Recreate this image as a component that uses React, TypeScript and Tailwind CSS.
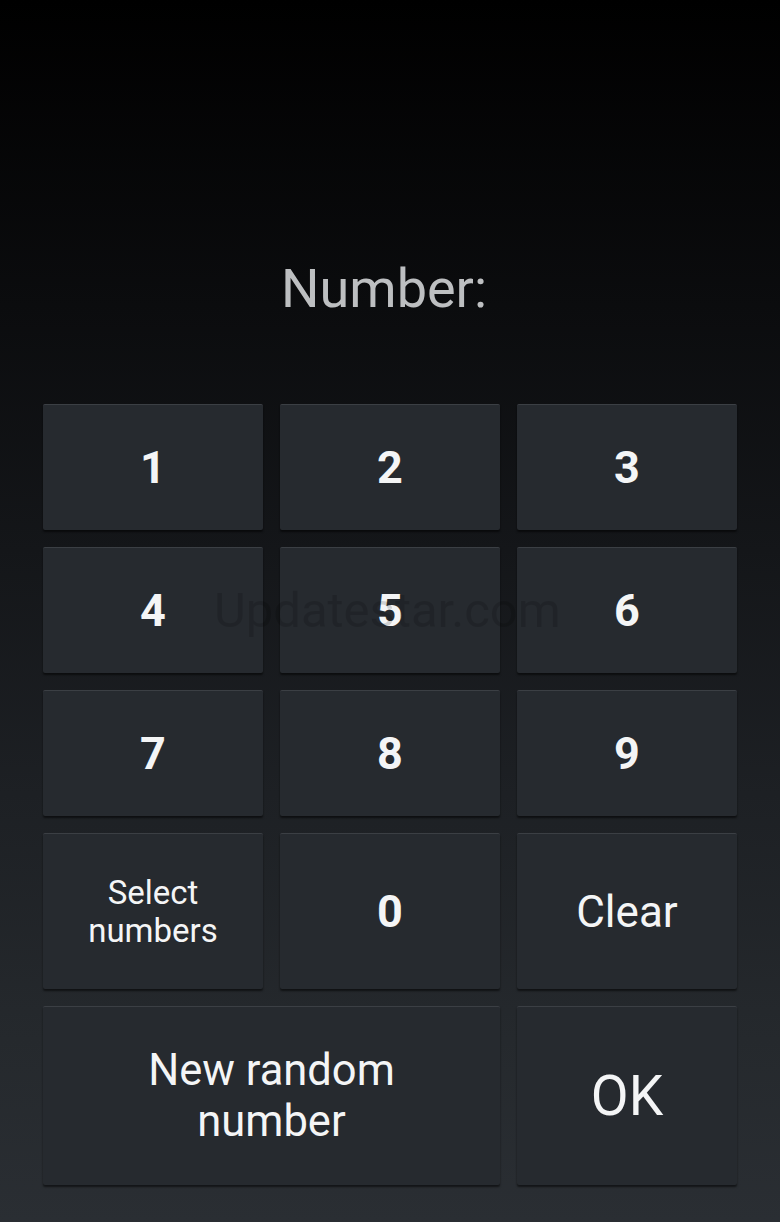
import React from "react";

const btn =
  "relative flex items-center justify-center rounded-[2px] bg-[#262a2f] border-t border-t-[#3b3f44] shadow-[0_2px_2px_rgba(0,0,0,0.55)] text-[#f4f5f6] text-center";

export default function App() {
  const digits = ["1", "2", "3", "4", "5", "6", "7", "8", "9"];
  return (
    <div
      className="relative w-[780px] h-[1222px] overflow-hidden bg-[linear-gradient(to_bottom,#000000_0%,#0b0c0e_25%,#141619_45%,#1d2024_65%,#25292d_85%,#2a2e33_100%)]"
      style={{ fontFamily: "Roboto, 'Noto Sans', sans-serif" }}
    >
      <div className="flex flex-col items-center pt-[262px] pr-[12px]">
        <div className="text-[54px] leading-none text-[#bdbfc1]">Number:</div>
      </div>
      <div className="mt-[88px] px-[43px] grid grid-cols-3 gap-[17px]">
        {digits.map((d) => (
          <div key={d} className={`${btn} h-[126px] text-[45px] font-bold`}>
            {d}
          </div>
        ))}
        <div className={`${btn} h-[156px] text-[33px] leading-[38px]`}>
          Select
          <br />
          numbers
        </div>
        <div className={`${btn} h-[156px] text-[45px] font-bold`}>0</div>
        <div className={`${btn} h-[156px] text-[44px]`}>Clear</div>
        <div className={`${btn} col-span-2 h-[179px] text-[43.5px] leading-[51px]`}>
          New random
          <br />
          number
        </div>
        <div className={`${btn} h-[179px] text-[55px]`}>OK</div>
      </div>
      <div className="pointer-events-none absolute left-[214px] top-[586px] text-[49px] leading-none text-black/15">
        Updatestar.com
      </div>
    </div>
  );
}
